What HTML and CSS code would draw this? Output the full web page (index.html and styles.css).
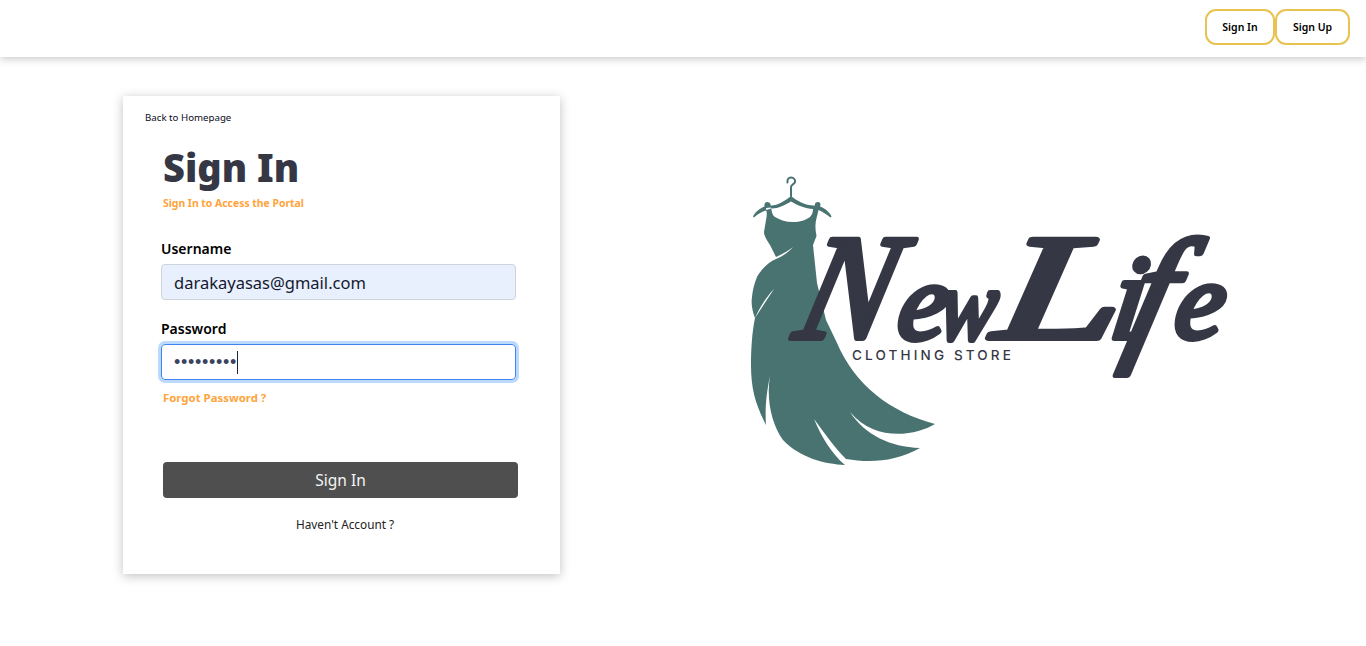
FILE: index.html
```html
<!DOCTYPE html>
<html lang="en">
<head>
<meta charset="utf-8">
<title>Sign In</title>
<link rel="stylesheet" href="styles.css">
</head>
<body>
<header class="topbar">
  <a class="nav-btn nav-in">Sign In</a>
  <a class="nav-btn nav-up">Sign Up</a>
</header>
<main class="page">
  <section class="card">
    <a class="back">Back to Homepage</a>
    <h1 class="title">Sign In</h1>
    <p class="subtitle">Sign In to Access the Portal</p>
    <label class="label label-user">Username</label>
    <div class="field field-filled">darakayasas@gmail.com</div>
    <label class="label label-pass">Password</label>
    <div class="field field-focus"><span class="dots">•••••••••</span><span class="caret"></span></div>
    <a class="forgot">Forgot Password ?</a>
    <button class="submit">Sign In</button>
    <a class="account">Haven't Account ?</a>
  </section>
  <svg class="logo" width="510" height="300" viewBox="745 172 510 300" role="img" aria-label="NewLife Clothing Store">
    <path class="hook" d="M787.500 182.500C787 179 789 177.500 791 177.500C794 177.500 795.500 180 795 182C794.500 184.500 791 184.500 791 187V196"/>
    <path class="dress" d="M753 216.500C755 212 760 208.500 764.500 206.500C764 204.500 765 202 767 202C769 202 771 203 770.500 205.500C777 206 785 201 791 196C797 201 806 206 815 205.500C814.500 203 816 202 818 202C820.500 202 821 204.500 820 206.500C825 208.500 829.500 212 831.500 216.500L830.500 217.500C826 214 822 211.500 818.500 210C817.500 215 815 222 815.500 227C815.500 232 816.500 234 816.500 236L813 245L817 283L826 320L837 343C855 385 890 412 935 424C915 436 875 442 850 412C865 435 890 447 920 448C895 462 870 463 846 459C835 448 825 434 814 419C822 438 832 454 845 465C825 464 800 458 783 440C772 425 766 400 770 376C766 395 765 410 766 425C756 405 751 390 751 365C751 350 752 332 755 318L774 289C767 296 760 307 755 318C752 310 751 303 752 297C753 288 755 282 757 277C762 268 769 262 776 259C783 256 789 252 793 247C789 250 783 254 776 257L770 245C767 240 764 236 764 232L766 220C767 216 767 212 766 208L771 207.500C772 213 773 216 775 217C780 220 786 222 793 222C800 222 806 220 810 217C812 215 813 212 813 209C806 209 797 205 791 201.500C785 205 777 209 771 208.500C768 209.500 765 210.500 762 212C759 213.500 756 215.500 754 217.500Z"/>
    <text class="script script-n" transform="translate(792 338) skewX(-14) scale(.93 1)">N</text>
    <text class="script script-e" transform="translate(895 339) skewX(-8)">e</text>
    <text class="script script-w" transform="translate(936 339) skewX(-8) scale(.85 1)">w</text>
    <text class="script script-l" transform="translate(992 338) skewX(-10) scale(1.5 1)">L</text>
    <text class="script script-i" transform="translate(1108 338) skewX(-8)">i</text>
    <text class="script script-f" transform="translate(1122 343) skewX(-14)">f</text>
    <text class="script script-e" transform="translate(1172 338) skewX(-8)">e</text>
    <text class="tagline" x="852" y="360">CLOTHING STORE</text>
  </svg>
</main>
</body>
</html>
```
FILE: styles.css
```css
* { box-sizing: border-box; }
html, body { margin: 0; height: 100%; }
body {
  background: #fff;
  font-family: "Noto Sans", "Open Sans", sans-serif;
  overflow: hidden;
}
.topbar {
  height: 57px;
  padding: 9px 16px 0 0;
  display: flex;
  justify-content: flex-end;
  align-items: flex-start;
  background: #fff;
  box-shadow: 0 2px 8px rgba(0, 0, 0, .22);
}
.nav-btn {
  height: 36px;
  display: flex;
  align-items: center;
  justify-content: center;
  border: 2px solid #e9c34f;
  border-radius: 11px;
  background: #fff;
  color: #000;
  font-size: 10.5px;
  font-weight: 600;
}
.nav-in { width: 70px; }
.nav-up { width: 75px; }
.page {
  display: flex;
  align-items: flex-start;
  padding: 39px 0 0 123px;
}
.card {
  flex: none;
  width: 437px;
  height: 478px;
  display: flex;
  flex-direction: column;
  align-items: flex-start;
  padding: 15px 42px 0 38px;
  background: #fff;
  box-shadow: 0 2px 10px rgba(0, 0, 0, .25);
}
.back {
  margin-left: -16px;
  font-size: 9.7px;
  line-height: 14px;
  color: #0b0b1e;
}
.title {
  margin: 16px 0 0 2px;
  font-size: 38px;
  line-height: 52px;
  font-weight: 900;
  color: #363745;
}
.subtitle {
  margin: 2px 0 0 2px;
  font-size: 10.4px;
  line-height: 16px;
  font-weight: 700;
  color: #ffa33a;
}
.label {
  font-size: 14px;
  line-height: 20px;
  font-weight: 600;
  color: #000;
}
.label-user { margin-top: 28px; }
.label-pass { margin-top: 19px; }
.field {
  width: 355px;
  height: 36px;
  margin-top: 5px;
  padding: 0 12px;
  display: flex;
  align-items: center;
  border: 1px solid #ced4da;
  border-radius: 4px;
  font-size: 16.5px;
  color: #15182e;
}
.field-filled { background: #e8f0fe; }
.field-focus {
  border-color: #3f84ee;
  box-shadow: 0 0 0 3px #bcdafd;
}
.dots {
  font-family: "Liberation Sans", sans-serif;
  font-size: 18px;
  line-height: 20px;
  letter-spacing: .7px;
  color: #3a4460;
}
.caret {
  width: 1px;
  height: 23px;
  background: #1d2440;
}
.forgot {
  margin: 10px 0 0 2px;
  font-size: 11.4px;
  line-height: 16px;
  font-weight: 700;
  color: #ffa33a;
}
.submit {
  width: 355px;
  height: 36px;
  margin: 56px 0 0 2px;
  border: 0;
  border-radius: 4px;
  background: #4f4f4f;
  color: #f4f4f4;
  font: 400 15.500px "Noto Sans", sans-serif;
}
.account {
  margin: 18px 0 0 135px;
  font-size: 11.8px;
  line-height: 16px;
  color: #222;
}
.logo {
  flex: none;
  margin: 76px 0 0 185px;
}
.hook {
  fill: none;
  stroke: #487371;
  stroke-width: 2;
  stroke-linecap: round;
}
.dress { fill: #487371; fill-rule: evenodd; }
.script {
  font-family: "Liberation Serif", serif;
  font-style: italic;
  font-weight: 400;
  fill: #363745;
  stroke: #363745;
  stroke-width: 6;
  stroke-linejoin: round;
  stroke-linecap: round;
}
.script-n { font-size: 150px; }
.script-e { font-size: 110px; }
.script-w { font-size: 100px; }
.script-l { font-size: 150px; }
.script-i { font-size: 120px; }
.script-f { font-size: 150px; }
.tagline {
  font-family: "Inter", "Lato", sans-serif;
  font-size: 13.5px;
  font-weight: 500;
  letter-spacing: 3.15px;
  fill: #363745;
}
```
